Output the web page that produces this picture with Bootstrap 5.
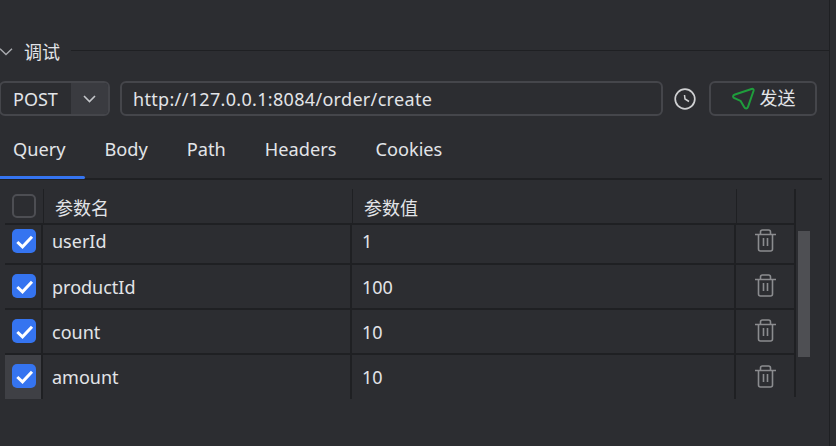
<!DOCTYPE html>
<html lang="zh-CN">
<head>
  <meta charset="UTF-8" />
  <meta name="viewport" content="width=device-width, initial-scale=1">
  <title>调试</title>
  <link href="https://cdn.jsdelivr.net/npm/bootstrap@5.3.0/dist/css/bootstrap.min.css" rel="stylesheet">
  <script src="https://cdn.jsdelivr.net/npm/bootstrap@5.3.0/dist/js/bootstrap.bundle.min.js"></script>
  <style>
    html, body {
      height: 446px;
      overflow: hidden;
    }

    body {
      background: #2c2d31;
      color: #e2e4e8;
      font-family: "Noto Sans", "Noto Sans CJK SC", sans-serif;
      font-size: 18px;
      line-height: 24px;
    }

    .panel {
      width: 830px;
      height: 446px;
      padding-top: 40px;
      border-right: 1px solid #1f2023;
    }

    .section-head {
      height: 24px;
      gap: 11px;
    }

    .section-head .rule {
      height: 1px;
      background: #1f2023;
      margin-top: -4px;
    }

    .request-bar {
      margin-top: 17px;
      margin-left: -1px;
      padding-right: 12px;
      height: 35px;
    }

    .method-select {
      width: 111px;
      border: 2px solid #45464b;
      border-radius: 6px;
      overflow: hidden;
    }

    .method-name {
      width: 70px;
      padding-left: 12px;
    }

    .method-arrow {
      background: #3a3b40;
    }

    .url-box {
      margin-left: 10px;
      width: 543px;
      padding-left: 11px;
      letter-spacing: .32px;
      border: 2px solid #45464b;
      border-radius: 6px;
    }

    .clock-slot {
      width: 46px;
      padding-right: 2px;
    }

    .send-btn {
      width: 108px;
      height: 35px;
      padding: 0;
      color: #e2e4e8;
      font-size: 18px;
      border: 2px solid #45464b;
      border-radius: 6px;
      gap: 5px;
    }

    .tab-strip {
      margin-top: 15px;
      height: 49px;
      margin-right: 7px;
      border-bottom: 2px solid #1f2023;
      gap: 39px;
      padding-left: 13px;
    }

    .tab-strip .nav-link {
      padding: 6px 0 0;
      color: #e2e4e8;
      font-size: 18.2px;
      line-height: 24px;
    }

    .tab-strip .tab-on {
      position: relative;
    }

    .tab-strip .tab-on::after {
      content: "";
      position: absolute;
      left: -13px;
      right: -19px;
      top: 45px;
      height: 3px;
      background: #3574f0;
      border-radius: 0 2px 2px 0;
    }

    .params-wrap {
      margin-top: 9px;
      margin-left: 5px;
      height: 208px;
    }

    .params {
      width: 791px;
      border-right: 2px solid #1f2023;
    }

    .param-head {
      height: 36px;
      border-bottom: 2px solid #1f2023;
      margin-right: -2px;
    }

    .param-head .cell-check {
      width: 39px;
    }

    .param-head .cell-check,
    .param-head .cell-name,
    .param-head .cell-value {
      border-right: 1px solid #1f2023;
    }

    .param-head .cell-name,
    .param-head .cell-value {
      padding-left: 11px;
      padding-top: 3px;
    }

    .param-row {
      height: 45px;
      border-bottom: 2px solid #1f2023;
    }

    .param-row:nth-child(2) {
      height: 40px;
      padding-bottom: 6px;
    }

    .param-row:nth-child(n+3) .tick {
      margin-top: -2px;
    }

    .param-row:last-child {
      height: 44px;
      border-bottom: 0;
    }

    .param-row .cell-check,
    .param-row .cell-name,
    .param-row .cell-value {
      border-right: 2px solid #1f2023;
    }

    .param-row:nth-child(2) .cell-check,
    .param-row:nth-child(2) .cell-name,
    .param-row:nth-child(2) .cell-value {
      margin-bottom: -6px;
      padding-bottom: 6px;
    }

    .cell-check {
      width: 38px;
      flex: none;
      padding-left: 7px;
    }

    .cell-name {
      width: 309px;
      flex: none;
      padding-left: 9px;
    }

    .cell-value {
      width: 384px;
      flex: none;
      padding-left: 10px;
    }

    .cell-del {
      flex: 1;
      padding-left: 2px;
    }

    .cell-del svg {
      margin-top: -2px;
    }

    .row-hover {
      background: #3f4045;
    }

    .form-check-input.tick {
      width: 24px;
      height: 24px;
      margin: 0;
      background-color: transparent;
      border: 2px solid #4d4e53;
      border-radius: 5px;
      flex: none;
    }

    .form-check-input.tick:checked {
      background-color: #3574f0;
      background-image: url("data:image/svg+xml,%3csvg xmlns='http://www.w3.org/2000/svg' viewBox='0 0 24 24'%3e%3cpath fill='none' stroke='%23fff' stroke-width='3' d='M5.300 13 10.500 17.800 20 7.700'/%3e%3c/svg%3e");
      background-size: 24px 24px;
      border: 0;
    }

    .param-row:nth-child(n+3) .form-check-input.tick {
      margin-top: -2px;
    }

    .scroll-thumb {
      width: 12px;
      height: 126px;
      margin-left: 2px;
      margin-top: 42px;
      background: #4e4f53;
    }
  </style>
</head>
<body>

  <div class="panel">
    <div class="section-head d-flex align-items-center">
      <svg width="13" height="8" viewBox="0 0 13 8" fill="none" stroke="#a9abaf" stroke-width="1.4"><path d="M0 .7 6 6.600 12 .7"/></svg>
      <span>调试</span>
      <div class="rule flex-grow-1"></div>
    </div>

    <div class="request-bar d-flex">
      <div class="method-select d-flex">
        <div class="method-name d-flex align-items-center">POST</div>
        <div class="method-arrow flex-grow-1 d-flex align-items-center justify-content-center">
          <svg width="13" height="8" viewBox="0 0 13 8" fill="none" stroke="#c4c6ca" stroke-width="1.6"><path d="M1 1 6.500 6.500 12 1"/></svg>
        </div>
      </div>
      <div class="url-box d-flex align-items-center">http://127.0.0.1:8084/order/create</div>
      <div class="clock-slot d-flex align-items-center justify-content-center">
        <svg width="22" height="22" viewBox="0 0 22 22" fill="none" stroke="#cfd0d2" stroke-width="1.7"><circle cx="11" cy="11" r="9.800"/><path d="M10.500 7 11 11 15 13.500" stroke-width="1.500"/></svg>
      </div>
      <button type="button" class="btn send-btn d-flex align-items-center justify-content-center">
        <svg width="24" height="24" viewBox="0 0 24 24" fill="none" stroke="#1f9d3c" stroke-width="2" stroke-linejoin="round"><path d="M20.500 2 4 7.500C1.500 8.400 1.500 10.400 3.500 11.200L9.500 13.800 13 19.800C14.300 22.200 16.200 22 17 19.800L22.500 4C23 2.400 22 1.500 20.500 2Z"/></svg>
        <span>发送</span>
      </button>
    </div>

    <ul class="nav tab-strip">
      <li class="nav-item"><a class="nav-link tab-on" href="#">Query</a></li>
      <li class="nav-item"><a class="nav-link" href="#">Body</a></li>
      <li class="nav-item"><a class="nav-link" href="#">Path</a></li>
      <li class="nav-item"><a class="nav-link" href="#">Headers</a></li>
      <li class="nav-item"><a class="nav-link" href="#">Cookies</a></li>
    </ul>

    <div class="params-wrap d-flex">
      <div class="params">
        <div class="param-head d-flex">
          <div class="cell-check d-flex align-items-center"><input class="form-check-input tick" type="checkbox"></div>
          <div class="cell-name d-flex align-items-center">参数名</div>
          <div class="cell-value d-flex align-items-center">参数值</div>
          <div class="cell-del"></div>
        </div>

        <div class="param-row d-flex">
          <div class="cell-check d-flex align-items-center"><input class="form-check-input tick" type="checkbox" checked></div>
          <div class="cell-name d-flex align-items-center">userId</div>
          <div class="cell-value d-flex align-items-center">1</div>
          <div class="cell-del d-flex align-items-center justify-content-center">
            <svg width="22" height="23" viewBox="0 0 22 23" fill="none" stroke="#8b8c8f" stroke-width="1.600"><path d="M0 5.500H21M5.500 5.500V3C5.500 1.800 6.300 1 7.500 1H13.500C14.700 1 15.500 1.800 15.500 3V5.500M3.500 5.500V20C3.500 21.200 4.300 22 5.500 22H15.500C16.700 22 17.500 21.200 17.500 20V5.500M8.500 9V17M12.500 9V17"/></svg>
          </div>
        </div>
        <div class="param-row d-flex">
          <div class="cell-check d-flex align-items-center"><input class="form-check-input tick" type="checkbox" checked></div>
          <div class="cell-name d-flex align-items-center">productId</div>
          <div class="cell-value d-flex align-items-center">100</div>
          <div class="cell-del d-flex align-items-center justify-content-center">
            <svg width="22" height="23" viewBox="0 0 22 23" fill="none" stroke="#8b8c8f" stroke-width="1.600"><path d="M0 5.500H21M5.500 5.500V3C5.500 1.800 6.300 1 7.500 1H13.500C14.700 1 15.500 1.800 15.500 3V5.500M3.500 5.500V20C3.500 21.200 4.300 22 5.500 22H15.500C16.700 22 17.500 21.200 17.500 20V5.500M8.500 9V17M12.500 9V17"/></svg>
          </div>
        </div>
        <div class="param-row d-flex">
          <div class="cell-check d-flex align-items-center"><input class="form-check-input tick" type="checkbox" checked></div>
          <div class="cell-name d-flex align-items-center">count</div>
          <div class="cell-value d-flex align-items-center">10</div>
          <div class="cell-del d-flex align-items-center justify-content-center">
            <svg width="22" height="23" viewBox="0 0 22 23" fill="none" stroke="#8b8c8f" stroke-width="1.600"><path d="M0 5.500H21M5.500 5.500V3C5.500 1.800 6.300 1 7.500 1H13.500C14.700 1 15.500 1.800 15.500 3V5.500M3.500 5.500V20C3.500 21.200 4.300 22 5.500 22H15.500C16.700 22 17.500 21.200 17.500 20V5.500M8.500 9V17M12.500 9V17"/></svg>
          </div>
        </div>
        <div class="param-row d-flex">
          <div class="cell-check row-hover d-flex align-items-center"><input class="form-check-input tick" type="checkbox" checked></div>
          <div class="cell-name d-flex align-items-center">amount</div>
          <div class="cell-value d-flex align-items-center">10</div>
          <div class="cell-del d-flex align-items-center justify-content-center">
            <svg width="22" height="23" viewBox="0 0 22 23" fill="none" stroke="#8b8c8f" stroke-width="1.600"><path d="M0 5.500H21M5.500 5.500V3C5.500 1.800 6.300 1 7.500 1H13.500C14.700 1 15.500 1.800 15.500 3V5.500M3.500 5.500V20C3.500 21.200 4.300 22 5.500 22H15.500C16.700 22 17.500 21.200 17.500 20V5.500M8.500 9V17M12.500 9V17"/></svg>
          </div>
        </div>
      </div>
      <div class="scroll-thumb"></div>
    </div>
  </div>

</body>
</html>
